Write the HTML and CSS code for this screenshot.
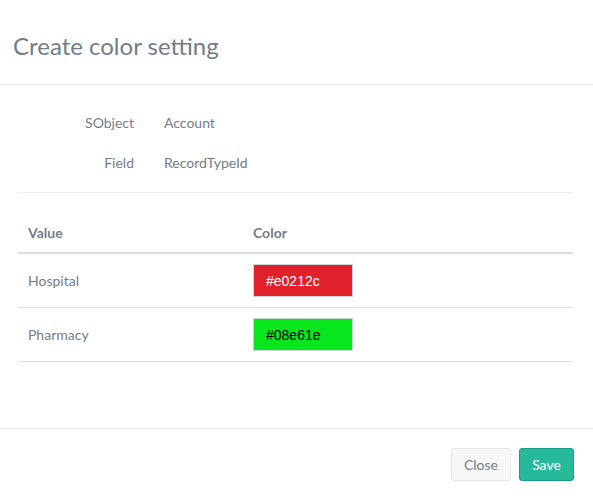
FILE: index.html
```html
<!DOCTYPE html>
<html>
<head>
<meta charset="utf-8">
<link rel="stylesheet" href="styles.css">
</head>
<body>
<div class="modal">
  <div class="modal-header">
    <h4 class="modal-title">Create color setting</h4>
  </div>
  <div class="modal-body">
    <div class="info">
      <div class="info-label">SObject</div>
      <div class="info-value">Account</div>
      <div class="info-label">Field</div>
      <div class="info-value">RecordTypeId</div>
    </div>
    <hr class="sep">
    <table class="color-table">
      <thead>
        <tr><th class="col-value">Value</th><th>Color</th></tr>
      </thead>
      <tbody>
        <tr>
          <td>Hospital</td>
          <td><input class="color-input light-text" type="text" value="#e0212c" style="background-color:#e0212c"></td>
        </tr>
        <tr>
          <td>Pharmacy</td>
          <td><input class="color-input" type="text" value="#08e61e" style="background-color:#08e61e"></td>
        </tr>
      </tbody>
    </table>
  </div>
  <div class="modal-footer">
    <button class="btn btn-default">Close</button>
    <button class="btn btn-success">Save</button>
  </div>
</div>
</body>
</html>
```
FILE: styles.css
```css
* { box-sizing: border-box; }
html, body {
  margin: 0;
  padding: 0;
  background: #fff;
}
body {
  font-family: Lato, "Helvetica Neue", Arial, sans-serif;
  font-size: 14px;
  color: #737d89;
}
.modal {
  width: 593px;
  height: 500px;
  display: flex;
  flex-direction: column;
}
.modal-header {
  height: 85px;
  padding: 0 13px;
  border-bottom: 1px solid #e5e5e5;
  display: flex;
  align-items: center;
  padding-top: 8px;
}
.modal-title {
  margin: 0;
  font-size: 24px;
  font-weight: 400;
  line-height: 1.1;
  color: #737d89;
}
.modal-body {
  padding: 17px 20px 0 18px;
  height: 343px;
}
.info {
  display: grid;
  grid-template-columns: 116px auto;
  column-gap: 30px;
  grid-auto-rows: 40px;
  align-items: center;
}
.info-label {
  text-align: right;
}
.sep {
  margin: 10px 0 0;
  border: 0;
  border-top: 1px solid #eeeeee;
  height: 0;
}
.color-table {
  width: 555px;
  margin-top: 20px;
  border-collapse: collapse;
}
.color-table th {
  text-align: left;
  font-weight: 700;
  padding: 10px 10px 9px;
  line-height: 20px;
  border-bottom: 2px solid #dddddd;
}
.color-table .col-value { width: 225px; }
.color-table td {
  padding: 10px 10px;
  line-height: 20px;
  border-bottom: 1px solid #dddddd;
  vertical-align: middle;
}
.color-input {
  display: block;
  width: 100px;
  height: 33px;
  margin: 0;
  padding: 0 0 0 12px;
  border: 1px solid #ccd3da;
  font-family: "Liberation Sans", Arial, sans-serif;
  font-size: 14px;
  color: #000;
  outline: none;
}
.light-text { color: #fff; }
.modal-footer {
  border-top: 1px solid #e5e5e5;
  flex: 1;
  display: flex;
  justify-content: flex-end;
  align-items: flex-start;
  gap: 8px;
  padding: 19px 19px 0 0;
}
.btn {
  height: 33px;
  font-family: Lato, "Helvetica Neue", Arial, sans-serif;
  font-size: 14px;
  border-radius: 3px;
  border: 1px solid transparent;
  padding: 0 6px;
  cursor: pointer;
}
.btn-default {
  width: 60px;
  background: #f7f7f7;
  border-color: #e6e6e6;
  color: #737d89;
}
.btn-success {
  width: 55px;
  background: #26B99A;
  border-color: #169F85;
  color: #fff;
}
```
